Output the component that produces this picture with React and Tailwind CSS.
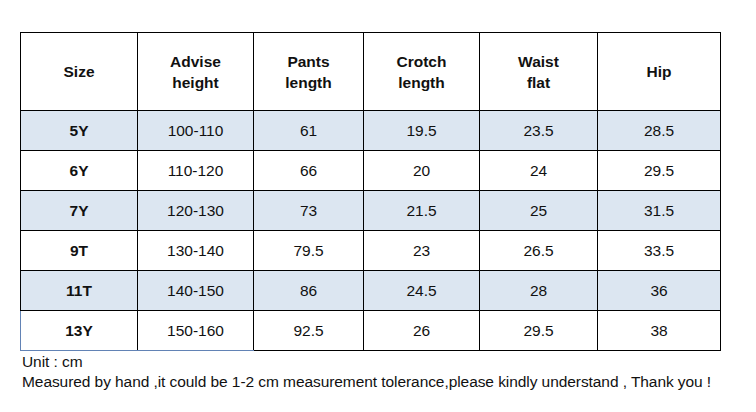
const rows = [
  ["5Y", "100-110", "61", "19.5", "23.5", "28.5"],
  ["6Y", "110-120", "66", "20", "24", "29.5"],
  ["7Y", "120-130", "73", "21.5", "25", "31.5"],
  ["9T", "130-140", "79.5", "23", "26.5", "33.5"],
  ["11T", "140-150", "86", "24.5", "28", "36"],
  ["13Y", "150-160", "92.5", "26", "29.5", "38"],
];

const heads = [
  ["Size"],
  ["Advise", "height"],
  ["Pants", "length"],
  ["Crotch", "length"],
  ["Waist", "flat"],
  ["Hip"],
];

const App = () => {
  return (
    <div className="w-[756px] h-[412px] bg-white font-['Liberation_Sans',Arial,sans-serif] text-[#111] pt-[32px] pl-[20px] overflow-hidden">
      <table className="table-fixed border-collapse w-[700px]">
        <colgroup>
          <col className="w-[117px]" />
          <col className="w-[116px]" />
          <col className="w-[110px]" />
          <col className="w-[116px]" />
          <col className="w-[118px]" />
          <col className="w-[123px]" />
        </colgroup>
        <thead>
          <tr className="h-[78px]">
            {heads.map((h, i) => (
              <th
                key={i}
                className="border border-black text-center align-middle font-bold text-[15.5px] leading-[21px]"
              >
                {h.map((w) => (
                  <div key={w}>{w}</div>
                ))}
              </th>
            ))}
          </tr>
        </thead>
        <tbody>
          {rows.map((r, ri) => (
            <tr
              key={r[0]}
              className={`h-[40px] ${ri % 2 === 0 ? "bg-[#dce6f1]" : "bg-white"}`}
            >
              {r.map((c, ci) => (
                <td
                  key={ci}
                  className={`border border-black text-center align-middle text-[15.5px] ${
                    ci === 0 ? "font-bold" : ""
                  } ${ri === 5 && ci < 2 ? "border-b-[#6283b5] border-l-[#6283b5]" : ""}`}
                >
                  {c}
                </td>
              ))}
            </tr>
          ))}
        </tbody>
      </table>
      <div className="pl-[2px] pt-[1px] text-[15.5px] leading-[20px] tracking-[-0.07px]">
        <p>Unit : cm</p>
        <p>
          Measured by hand ,it could be 1-2 cm measurement tolerance,please kindly understand , Thank you !
        </p>
      </div>
    </div>
  );
};

export default App;
